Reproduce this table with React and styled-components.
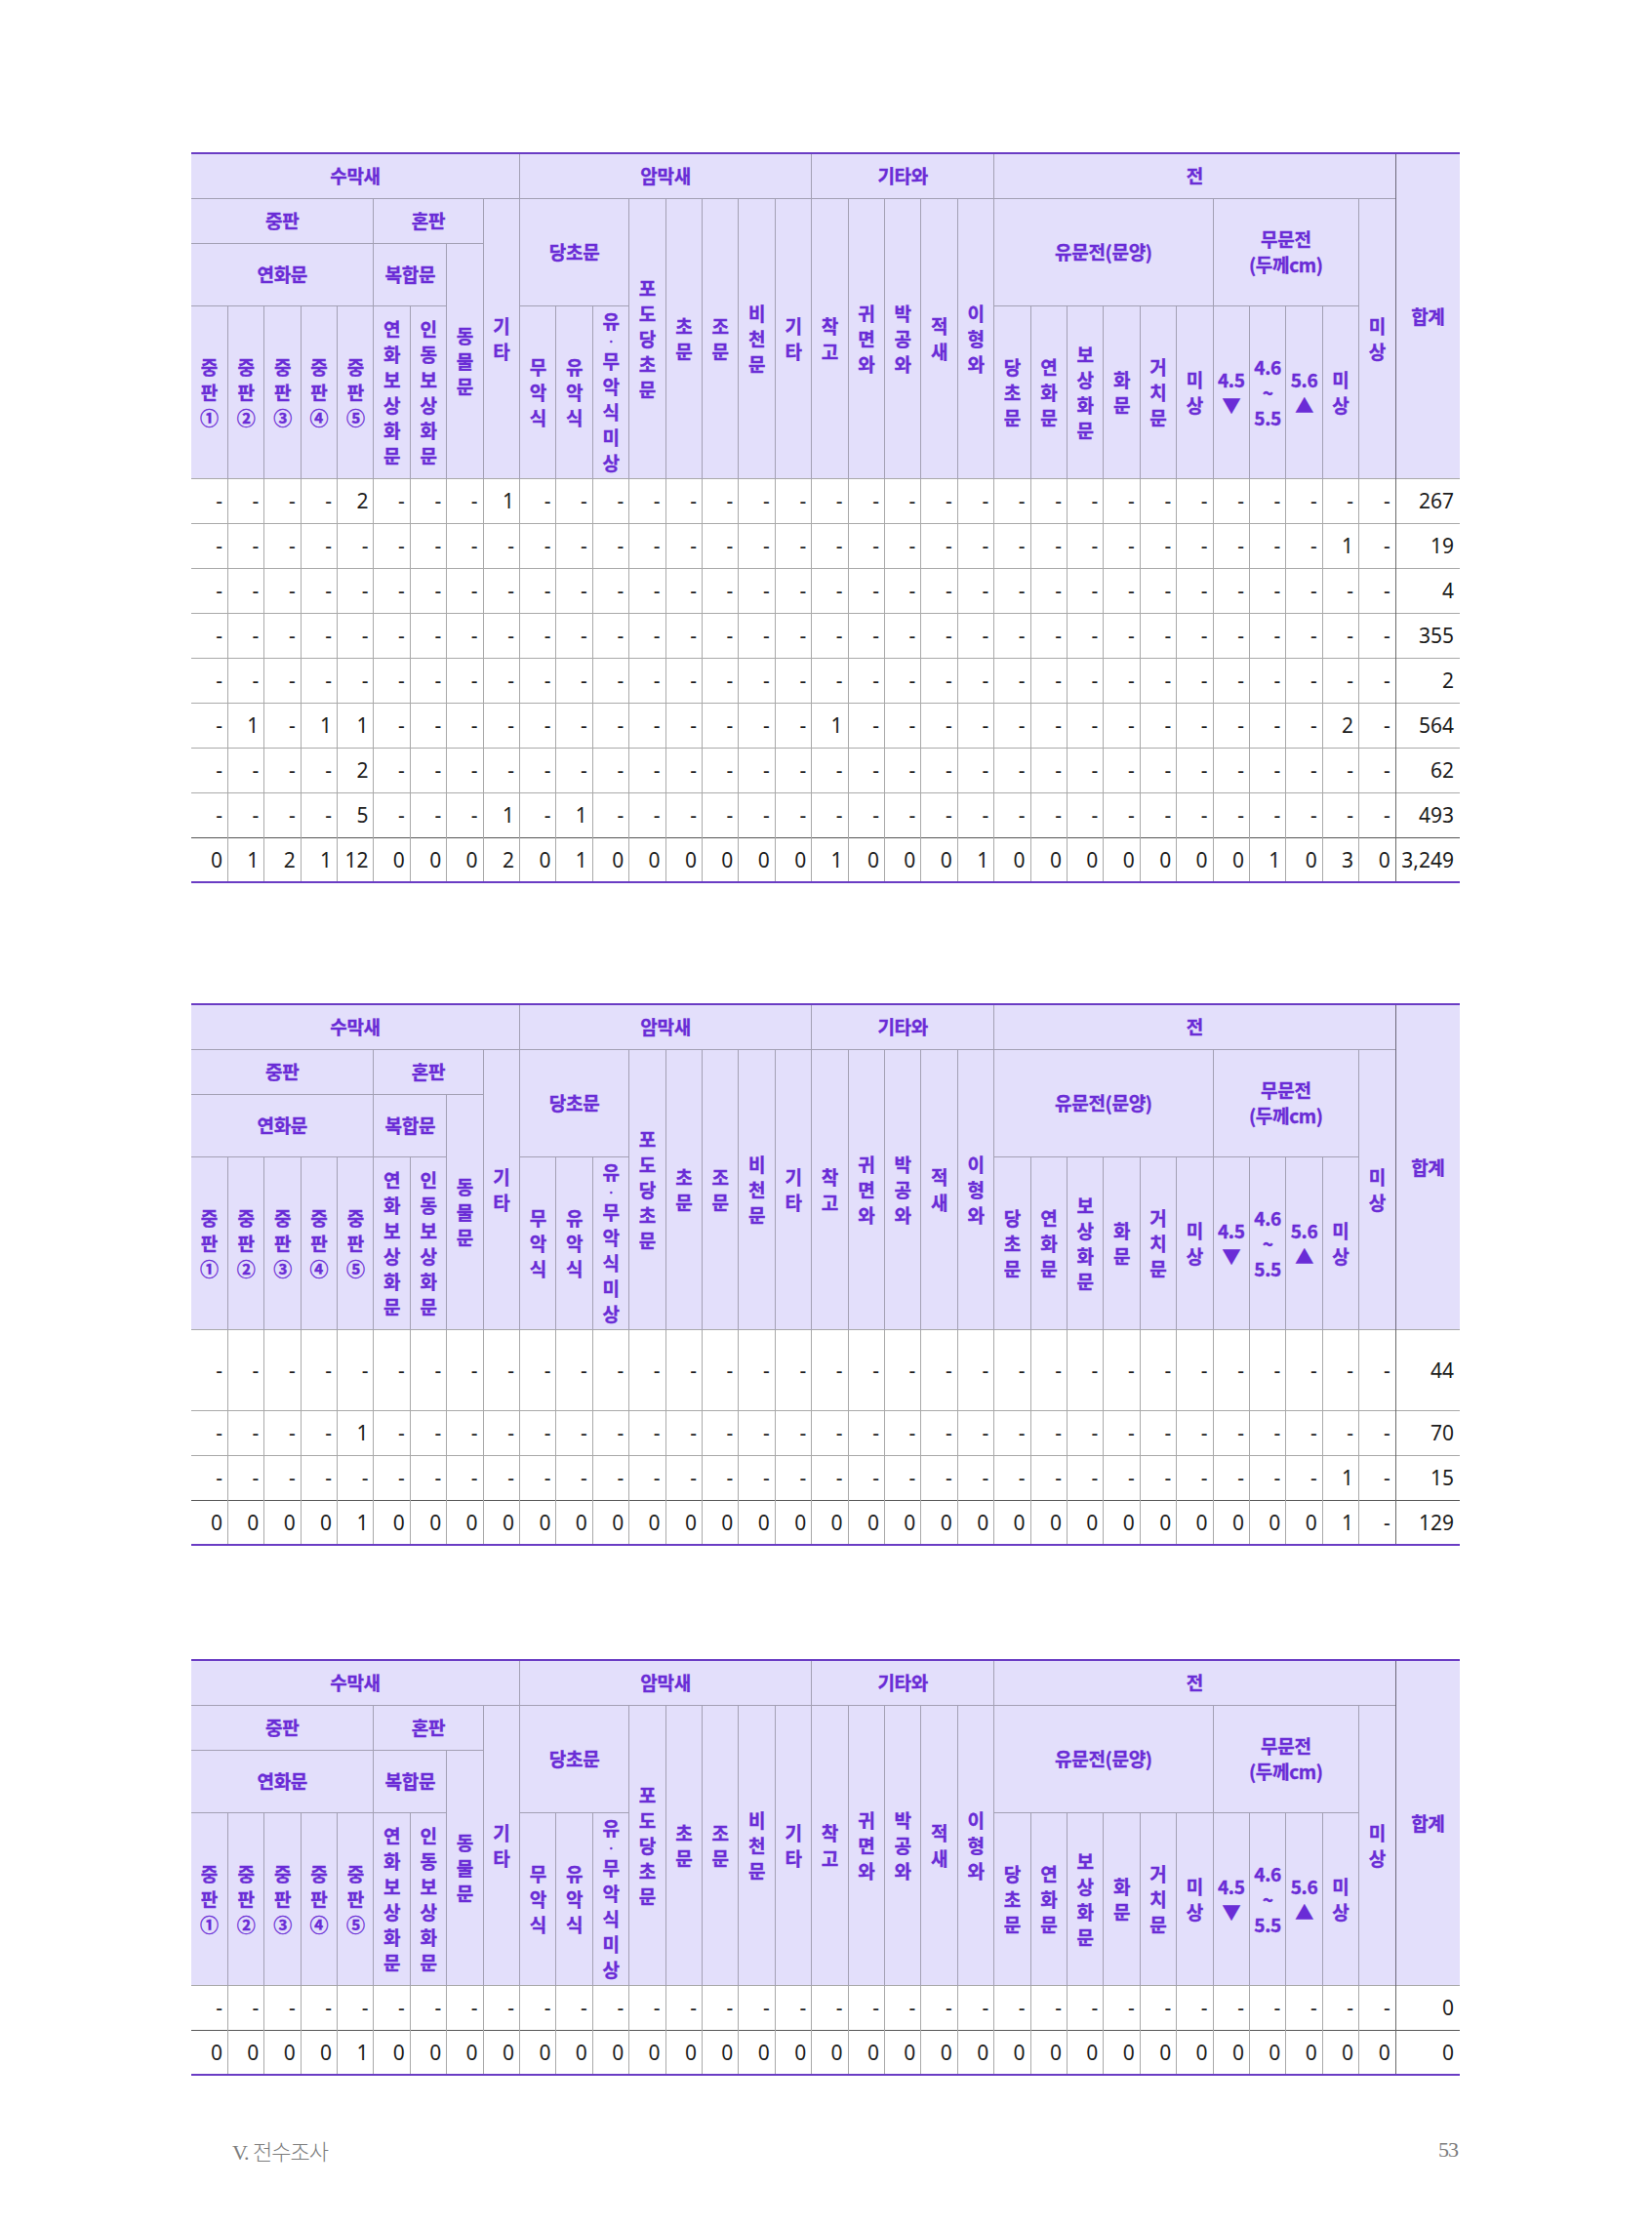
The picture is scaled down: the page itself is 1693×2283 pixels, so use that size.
import React from "react";
import styled, { createGlobalStyle, css } from "styled-components";

const GlobalStyle = createGlobalStyle`
  body {
    margin: 0;
    background: #fff;
  }
`;

const Page = styled.div`
  width: 1693px;
  min-height: 2283px;
  box-sizing: border-box;
  padding: 156px 0 0 196px;
  display: flex;
  flex-direction: column;
`;

const Table = styled.table`
  width: 1300px;
  table-layout: fixed;
  border-collapse: collapse;
  border-top: 2px solid #6a3cc4;
  border-bottom: 2px solid #6a3cc4;
  border-left: hidden;
  border-right: hidden;
  margin-top: ${(p) => p.$gap || 0}px;
`;

const Col = styled.col`
  width: ${(p) => p.$w}px;
`;

const HeadRow = styled.tr`
  height: ${(p) => p.$h}px;
`;

const Th = styled.th`
  background: #e3dffb;
  color: #6a2cd6;
  font: 700 19px/26px "Noto Sans CJK KR", "Noto Sans", sans-serif;
  -webkit-text-stroke: 0.35px #6a2cd6;
  letter-spacing: -0.3px;
  padding: 0;
  text-align: center;
  vertical-align: middle;
  border-top: 1px solid #a3a0b4;
  border-left: 1px solid #a3a0b4;
  border-right: none;
  border-bottom: none;
  ${(p) =>
    p.$sum &&
    css`
      border-left: 1px solid #6c687a;
    `}
`;

const Stack = styled.span`
  display: inline-flex;
  flex-direction: column;
  align-items: center;
`;

const Line = styled.span`
  display: block;
  line-height: 26px;
  white-space: nowrap;
  ${(p) =>
    p.$dot &&
    css`
      font-size: 11px;
      line-height: 15px;
    `}
`;

const Row = styled.tr`
  height: ${(p) => p.$h || 46}px;
`;

const Td = styled.td`
  font: 400 21px "Noto Sans", "DejaVu Sans", sans-serif;
  color: #1c1c1c;
  text-align: right;
  vertical-align: middle;
  white-space: nowrap;
  padding: 0 5px 0 0;
  border-top: 1px solid #a9a9a9;
  border-left: 1px solid #a9a9a9;
  border-right: none;
  border-bottom: none;
  ${(p) =>
    p.$total &&
    css`
      border-top: 1px solid #555;
    `}
  ${(p) =>
    p.$sum &&
    css`
      border-left: 1px solid #6a6a6a;
      padding-right: 6px;
    `}
`;

const Footer = styled.footer`
  width: 1300px;
  box-sizing: border-box;
  margin-top: 60px;
  padding: 0 2px 0 42px;
  display: flex;
  justify-content: space-between;
  align-items: center;
  font: 300 22px "Liberation Serif", "Noto Sans CJK KR", serif;
  color: #7c7c7c;
  letter-spacing: -1px;
`;

function V({ t }) {
  const lines = Array.isArray(t) ? t : Array.from(t);
  return (
    <Stack>
      {lines.map((l, i) => (
        <Line key={i} $dot={l === "·"}>
          {l}
        </Line>
      ))}
    </Stack>
  );
}

const tall = ["포도당초문", "초문", "조문", "비천문", "기타", "착고", "귀면와", "박공와", "적새", "이형와"];

const leaves = [
  "중판①",
  "중판②",
  "중판③",
  "중판④",
  "중판⑤",
  "연화보상화문",
  "인동보상화문",
  "무악식",
  "유악식",
  "유·무악식미상",
  "당초문",
  "연화문",
  "보상화문",
  "화문",
  "거치문",
  "미상",
  ["4.5", "▼"],
  ["4.6", "~", "5.5"],
  ["5.6", "▲"],
  "미상",
];

function Head() {
  return (
    <thead>
      <HeadRow $h={46}>
        <Th colSpan={9}>수막새</Th>
        <Th colSpan={8}>암막새</Th>
        <Th colSpan={5}>기타와</Th>
        <Th colSpan={11}>전</Th>
        <Th rowSpan={4} $sum>
          합계
        </Th>
      </HeadRow>
      <HeadRow $h={46}>
        <Th colSpan={5}>중판</Th>
        <Th colSpan={3}>혼판</Th>
        <Th rowSpan={3}>
          <V t="기타" />
        </Th>
        <Th colSpan={3} rowSpan={2}>
          당초문
        </Th>
        {tall.map((t, i) => (
          <Th key={i} rowSpan={3}>
            <V t={t} />
          </Th>
        ))}
        <Th colSpan={6} rowSpan={2}>
          유문전(문양)
        </Th>
        <Th colSpan={4} rowSpan={2}>
          무문전
          <br />
          (두께cm)
        </Th>
        <Th rowSpan={3}>
          <V t="미상" />
        </Th>
      </HeadRow>
      <HeadRow $h={64}>
        <Th colSpan={5}>연화문</Th>
        <Th colSpan={2}>복합문</Th>
        <Th rowSpan={2}>
          <V t="동물문" />
        </Th>
      </HeadRow>
      <HeadRow $h={177}>
        {leaves.map((t, i) => (
          <Th key={i}>
            <V t={t} />
          </Th>
        ))}
      </HeadRow>
    </thead>
  );
}

const fill = (marks, base = "-") => {
  const cells = Array(33).fill(base);
  Object.entries(marks).forEach(([k, v]) => {
    cells[Number(k) - 1] = v;
  });
  return cells;
};

const tables = [
  {
    gap: 0,
    rows: [
      { cells: fill({ 5: 2, 9: 1 }), sum: "267" },
      { cells: fill({ 32: 1 }), sum: "19" },
      { cells: fill({}), sum: "4" },
      { cells: fill({}), sum: "355" },
      { cells: fill({}), sum: "2" },
      { cells: fill({ 2: 1, 4: 1, 5: 1, 18: 1, 32: 2 }), sum: "564" },
      { cells: fill({ 5: 2 }), sum: "62" },
      { cells: fill({ 5: 5, 9: 1, 11: 1 }), sum: "493" },
      {
        total: true,
        cells: fill({ 2: 1, 3: 2, 4: 1, 5: 12, 9: 2, 11: 1, 18: 1, 22: 1, 30: 1, 32: 3 }, 0),
        sum: "3,249",
      },
    ],
  },
  {
    gap: 123,
    rows: [
      { cells: fill({}), sum: "44", h: 83 },
      { cells: fill({ 5: 1 }), sum: "70" },
      { cells: fill({ 32: 1 }), sum: "15" },
      { total: true, cells: fill({ 5: 1, 32: 1, 33: "-" }, 0), sum: "129" },
    ],
  },
  {
    gap: 116,
    rows: [
      { cells: fill({}), sum: "0" },
      { total: true, cells: fill({ 5: 1 }, 0), sum: "0" },
    ],
  },
];

function DataTable({ gap, rows }) {
  return (
    <Table $gap={gap}>
      <colgroup>
        {Array.from({ length: 33 }, (_, i) => (
          <Col key={i} $w={37.4} />
        ))}
        <Col $w={65.8} />
      </colgroup>
      <Head />
      <tbody>
        {rows.map((r, i) => (
          <Row key={i} $h={r.h}>
            {r.cells.map((c, j) => (
              <Td key={j} $total={r.total}>
                {c}
              </Td>
            ))}
            <Td $total={r.total} $sum>
              {r.sum}
            </Td>
          </Row>
        ))}
      </tbody>
    </Table>
  );
}

export default function App() {
  return (
    <>
      <GlobalStyle />
      <Page>
        {tables.map((t, i) => (
          <DataTable key={i} gap={t.gap} rows={t.rows} />
        ))}
        <Footer>
          <span>V. 전수조사</span>
          <span>53</span>
        </Footer>
      </Page>
    </>
  );
}
